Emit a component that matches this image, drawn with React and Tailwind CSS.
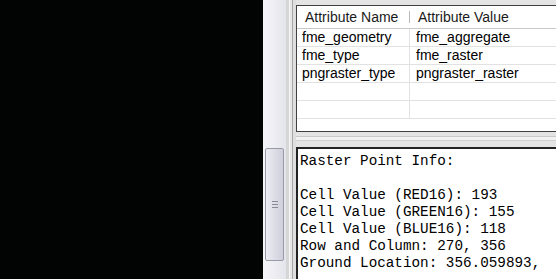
const ROWS = [
  ['fme_geometry', 'fme_aggregate'],
  ['fme_type', 'fme_raster'],
  ['pngraster_type', 'pngraster_raster'],
  ['', ''],
  ['', ''],
];

const INFO = [
  'Raster Point Info:',
  '',
  'Cell Value (RED16): 193',
  'Cell Value (GREEN16): 155',
  'Cell Value (BLUE16): 118',
  'Row and Column: 270, 356',
  'Ground Location: 356.059893,',
];

function Scrollbar() {
  return (
    <div className="flex w-[23px] flex-col bg-gradient-to-r from-[#f6f6f9] to-[#e4e4ec] pt-[148px]">
      <div className="mx-[2px] flex h-[113px] items-center justify-center rounded-[2px] border border-[#9a9aa6] bg-gradient-to-r from-[#ececf2] to-[#cfcfdc]">
        <div className="flex w-[6px] flex-col gap-[2px]">
          <div className="h-px bg-[#8a8a98]" />
          <div className="h-px bg-[#8a8a98]" />
          <div className="h-px bg-[#8a8a98]" />
        </div>
      </div>
    </div>
  );
}

export default function App() {
  return (
    <div className="flex h-[279px] w-[556px] overflow-hidden bg-[#e4e4e4] font-['Liberation_Sans',sans-serif]">
      <div className="w-[263px] shrink-0 bg-[#020303]" />
      <Scrollbar />

      {/* splitter */}
      <div className="flex w-[10px] shrink-0">
        <div className="w-[3px] bg-[#d6d6d6]" />
        <div className="w-px bg-[#f4f4f4]" />
        <div className="w-[2px] bg-[#e6e6e6]" />
        <div className="w-px bg-[#a8a8a8]" />
        <div className="w-[3px] bg-[#dedede]" />
      </div>

      <div className="flex min-w-0 flex-1 flex-col pt-[5px]">
        {/* attribute table */}
        <div className="h-[127px] w-[300px] border-l border-t border-b border-[#404040] bg-white">
          <div className="flex h-[23px] border-b border-[#c8c8c8] text-[14px] text-[#1a1a1a]">
            <div className="flex w-[112px] items-center pl-[8px]">Attribute Name</div>
            <div className="my-[5px] w-px bg-[#b8b8b8]" />
            <div className="flex flex-1 items-center pl-[8px]">Attribute Value</div>
          </div>
          {ROWS.map((r, i) => (
            <div key={i} className="flex h-[18px] border-b border-[#e2e2e2] text-[14px] leading-[17px] text-black">
              <div className="w-[113px] border-r border-[#e2e2e2] pl-[5px]">{r[0]}</div>
              <div className="flex-1 pl-[6px]">{r[1]}</div>
            </div>
          ))}
        </div>

        {/* horizontal splitter */}
        <div className="flex h-[15px] flex-col pt-[4px]">
          <div className="h-px bg-[#c9c9c9]" />
          <div className="h-[3px] bg-[#f2f2f2]" />
          <div className="h-px bg-[#d0d0d0]" />
        </div>

        {/* info text */}
        <div className="flex-1 border-l-2 border-t-2 border-l-[#222] border-t-[#222] bg-white pl-[2px] pt-[4px] font-['Liberation_Mono',monospace] text-[14.3px] leading-[17px] text-black">
          {INFO.map((line, i) => (
            <div key={i} className="h-[17px] whitespace-pre">{line}</div>
          ))}
        </div>
      </div>
    </div>
  );
}
